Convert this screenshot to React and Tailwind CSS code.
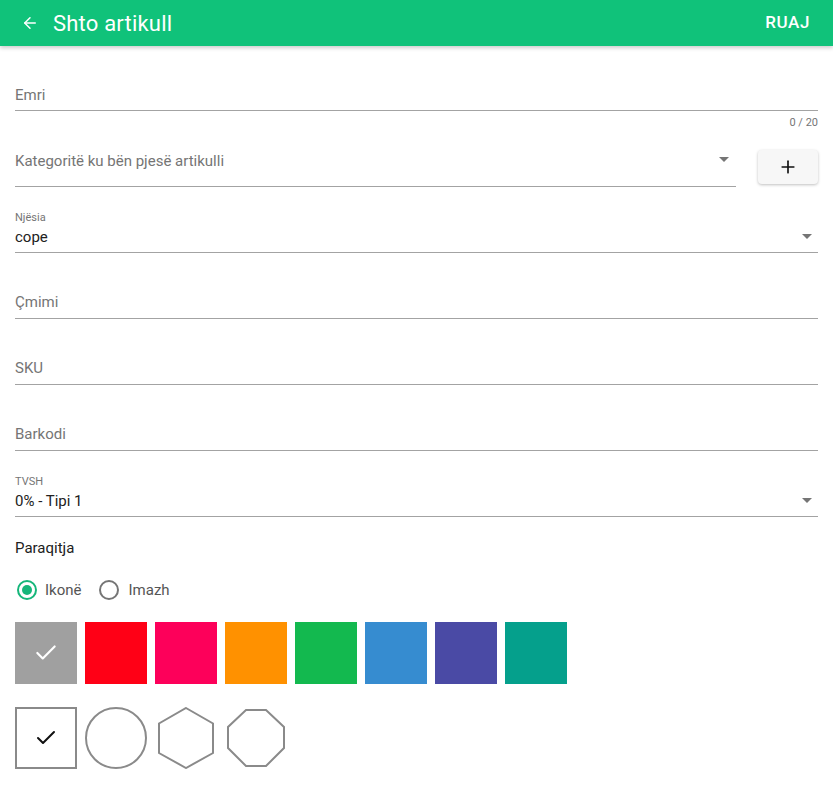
import { ArrowLeft, Plus, Check } from "lucide-react";

const Caret = ({ className = "" }) => (
  <svg width="10" height="5" viewBox="0 0 10 5" className={className}>
    <path d="M0 0 L10 0 L5 5 Z" fill="#757575" />
  </svg>
);

const TextField = ({ label }) => (
  <div className="h-[66px] flex items-end pb-[4px] border-b border-[#a3a3a3]">
    <span className="text-[15px] leading-[24px] text-[#757575]">{label}</span>
  </div>
);

const SelectField = ({ label, value }) => (
  <div className="h-[66px] flex items-end justify-between pb-[3px] border-b border-[#a3a3a3]">
    <div className="flex flex-col">
      <span className="text-[11px] leading-[14px] text-[#757575]">{label}</span>
      <span className="text-[15px] leading-[24px] text-[#212121]">{value}</span>
    </div>
    <Caret className="mb-[10px] mr-[6px]" />
  </div>
);

const App = () => {
  const colors = [
    "#a0a0a0",
    "#ff0016",
    "#fd005a",
    "#ff9100",
    "#13b94f",
    "#368cd0",
    "#4a4aa5",
    "#05a08c",
  ];

  return (
    <div className="w-[833px] h-[801px] bg-white font-['Roboto',sans-serif] overflow-hidden">
      <header className="h-[46px] bg-[#10c27a] flex items-center justify-between pl-[21px] pr-[23px] shadow-[0_2px_4px_rgba(0,0,0,0.2)] relative">
        <div className="flex items-center">
          <ArrowLeft size={18} color="white" strokeWidth={2} />
          <span className="ml-[14px] text-[22px] text-white tracking-[0.2px]">Shto artikull</span>
        </div>
        <span className="text-[17px] font-medium text-white tracking-[0.6px]">RUAJ</span>
      </header>

      <main className="px-[15px]">
        <div className="h-[65px] flex items-end pb-[3px] border-b border-[#a3a3a3]">
          <span className="text-[15px] leading-[24px] text-[#757575]">Emri</span>
        </div>
        <div className="mt-[4px] text-right text-[11px] leading-[16px] text-[#757575]">0 / 20</div>

        <div className="flex">
          <div className="flex-1 h-[56px] flex items-end justify-between pb-[13px] border-b border-[#a3a3a3]">
            <span className="text-[15px] leading-[24px] text-[#757575]">
              Kategoritë ku bën pjesë artikulli
            </span>
            <Caret className="mb-[11px] mr-[7px]" />
          </div>
          <button className="ml-[22px] mt-[19px] w-[60px] h-[34px] rounded bg-[#f7f7f7] shadow-[0_1px_3px_rgba(0,0,0,0.25)] flex items-center justify-center">
            <Plus size={20} color="#111" strokeWidth={2} />
          </button>
        </div>

        <SelectField label="Njësia" value="cope" />
        <TextField label="Çmimi" />
        <TextField label="SKU" />
        <TextField label="Barkodi" />
        <SelectField label="TVSH" value="0% - Tipi 1" />

        <div className="mt-[19px] text-[15px] leading-[24px] text-[#212121]">Paraqitja</div>

        <div className="mt-[18px] h-[24px] flex items-center pl-[2px]">
          <span className="w-[20px] h-[20px] rounded-full border-2 border-[#15b67a] flex items-center justify-center">
            <span className="w-[10px] h-[10px] rounded-full bg-[#15b67a]" />
          </span>
          <span className="ml-[8px] text-[15px] text-[#555]">Ikonë</span>
          <span className="ml-[18px] w-[20px] h-[20px] rounded-full border-2 border-[#757575]" />
          <span className="ml-[9px] text-[15px] text-[#555]">Imazh</span>
        </div>

        <div className="mt-[20px] flex gap-[8px]">
          {colors.map((c, i) => (
            <div
              key={c}
              className="w-[62px] h-[62px] flex items-center justify-center"
              style={{ backgroundColor: c }}
            >
              {i === 0 && <Check size={26} color="white" strokeWidth={2} />}
            </div>
          ))}
        </div>

        <div className="mt-[23px] flex gap-[8px]">
          <div className="w-[62px] h-[62px] border-2 border-[#8a8a8a] flex items-center justify-center">
            <Check size={24} color="#111" strokeWidth={2} />
          </div>
          <svg width="62" height="62" viewBox="0 0 62 62">
            <circle cx="31" cy="31" r="30" fill="none" stroke="#8a8a8a" strokeWidth="2" />
          </svg>
          <svg width="62" height="62" viewBox="0 0 62 62">
            <polygon
              points="31,1 58,16.5 58,46 31,61 4,46 4,16.5"
              fill="none"
              stroke="#8a8a8a"
              strokeWidth="2"
            />
          </svg>
          <svg width="62" height="62" viewBox="0 0 62 62">
            <polygon
              points="21,3 41,3 59,20 59,41 41,59 21,59 3,41 3,20"
              fill="none"
              stroke="#8a8a8a"
              strokeWidth="2"
            />
          </svg>
        </div>
      </main>
    </div>
  );
};

export default App;
